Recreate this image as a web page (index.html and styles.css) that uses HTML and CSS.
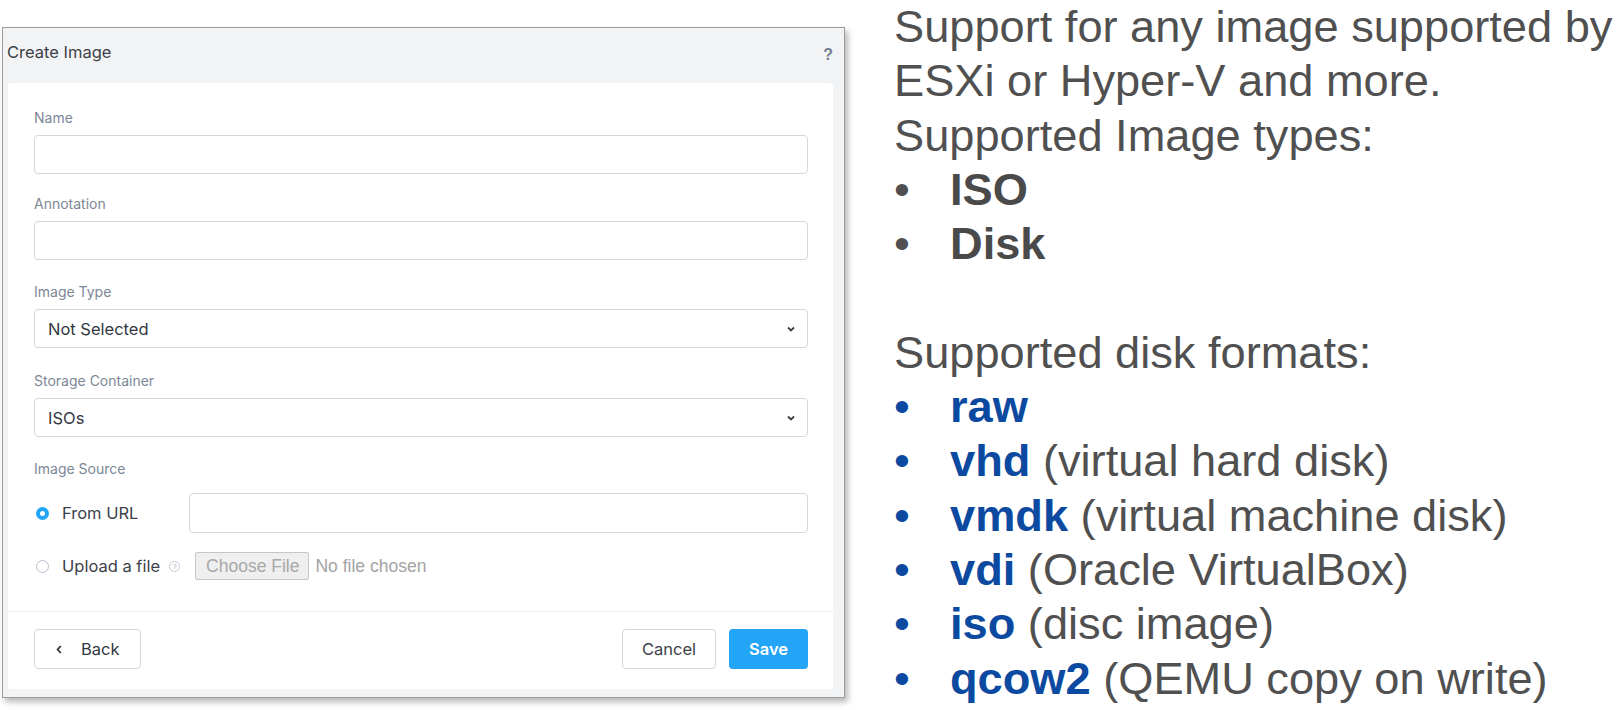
FILE: index.html
```html
<!DOCTYPE html>
<html lang="en">
<head>
<meta charset="utf-8">
<title>Create Image</title>
<link rel="stylesheet" href="styles.css">
</head>
<body>
<div class="page">
  <div class="dialog">
    <div class="dialog-header">
      <span class="dialog-title">Create Image</span>
      <span class="help">?</span>
    </div>
    <div class="panel">
      <div class="panel-body">
        <div class="field field-tight">
          <div class="label">Name</div>
          <div class="input"></div>
        </div>
        <div class="field">
          <div class="label">Annotation</div>
          <div class="input"></div>
        </div>
        <div class="field field-loose">
          <div class="label">Image Type</div>
          <div class="input select">
            <span>Not Selected</span>
            <svg class="chev" width="8" height="6" viewBox="0 0 8 6"><path d="M1 1.5 L4 4.5 L7 1.5" fill="none" stroke="#3a3f46" stroke-width="1.8"/></svg>
          </div>
        </div>
        <div class="field">
          <div class="label">Storage Container</div>
          <div class="input select">
            <span>ISOs</span>
            <svg class="chev" width="8" height="6" viewBox="0 0 8 6"><path d="M1 1.5 L4 4.5 L7 1.5" fill="none" stroke="#3a3f46" stroke-width="1.8"/></svg>
          </div>
        </div>
        <div class="label">Image Source</div>
        <div class="source-row">
          <div class="radio-wrap">
            <span class="radio radio-on"></span>
            <span class="radio-label">From URL</span>
          </div>
          <div class="input"></div>
        </div>
        <div class="upload-row">
          <span class="radio"></span>
          <span class="radio-label">Upload a file</span>
          <span class="mini-help">?</span>
          <span class="file-btn">Choose File</span>
          <span class="file-none">No file chosen</span>
        </div>
      </div>
      <div class="panel-footer">
        <div class="btn btn-back">
          <svg width="6" height="9" viewBox="0 0 6 9"><path d="M4.8 1 L1.6 4.5 L4.8 8" fill="none" stroke="#2f343b" stroke-width="1.8"/></svg>
          <span>Back</span>
        </div>
        <div class="footer-right">
          <div class="btn btn-cancel">Cancel</div>
          <div class="btn btn-save">Save</div>
        </div>
      </div>
    </div>
  </div>

  <div class="notes">
    <p>Support for any image supported by</p>
    <p>ESXi or Hyper-V and more.</p>
    <p>Supported Image types:</p>
    <ul class="list">
      <li><span class="bullet">•</span><b>ISO</b></li>
      <li><span class="bullet">•</span><b>Disk</b></li>
    </ul>
    <p class="gap">Supported disk formats:</p>
    <ul class="list blue">
      <li><span class="bullet">•</span><b>raw</b></li>
      <li><span class="bullet">•</span><b>vhd</b>&nbsp;(virtual hard disk)</li>
      <li><span class="bullet">•</span><b>vmdk</b>&nbsp;(virtual machine disk)</li>
      <li><span class="bullet">•</span><b>vdi</b>&nbsp;(Oracle VirtualBox)</li>
      <li><span class="bullet">•</span><b>iso</b>&nbsp;(disc image)</li>
      <li><span class="bullet">•</span><b>qcow2</b>&nbsp;(QEMU copy on write)</li>
    </ul>
  </div>
</div>
</body>
</html>
```
FILE: styles.css
```css
* { box-sizing: border-box; }
html, body { margin: 0; padding: 0; background: #ffffff; }
body { width: 1623px; height: 710px; overflow: hidden; }

.page {
  display: flex;
  align-items: flex-start;
}

/* ---------- dialog ---------- */
.dialog {
  margin: 27px 0 0 2px;
  width: 843px;
  height: 671px;
  border: 1px solid #9c9c9c;
  background: #f2f3f5;
  box-shadow: 3px 4px 6px rgba(0, 0, 0, 0.28);
  display: flex;
  flex-direction: column;
  font-family: Inter, Lato, sans-serif;
}

.dialog-header {
  height: 55px;
  display: flex;
  justify-content: space-between;
  align-items: flex-start;
  padding: 14px 11px 0 4px;
}
.dialog-title {
  font-size: 16.5px;
  line-height: 20px;
  color: #3c4148;
}
.help {
  margin-top: 5px;
  font-size: 16px;
  line-height: 16px;
  font-weight: 900;
  color: #6f7e92;
  font-family: "Liberation Sans", Arial, sans-serif;
}

.panel {
  flex: 1;
  margin: 0 11px 8px 5px;
  background: #ffffff;
  border-radius: 3px;
  display: flex;
  flex-direction: column;
}
.panel-body {
  padding: 27px 25px 25px 26px;
  border-bottom: 1px solid #eef0f3;
}

.field { margin-bottom: 24px; }
.field-tight { margin-bottom: 22px; }
.field-loose { margin-bottom: 25px; }
.label {
  font-size: 14px;
  line-height: 16px;
  color: #7c8796;
  margin-bottom: 9px;
}
.panel-body > .label { margin-bottom: 16px; }

.input {
  height: 39px;
  border: 1px solid #d2d7df;
  border-radius: 4px;
  background: #fff;
}
.select {
  display: flex;
  align-items: center;
  justify-content: space-between;
  padding: 0 12px 0 13px;
  font-size: 16.5px;
  color: #33383f;
}
.chev { display: block; }

.source-row {
  display: grid;
  grid-template-columns: 155px 1fr;
  align-items: center;
  height: 40px;
}
.source-row .input { height: 40px; }
.radio-wrap {
  display: flex;
  align-items: center;
  padding-left: 2px;
}
.radio {
  width: 13px;
  height: 13px;
  border-radius: 50%;
  border: 1px solid #b7bfcb;
  background: #fff;
  flex: none;
}
.radio-on {
  border: 4px solid #22a5f7;
}
.radio-label {
  margin-left: 13px;
  font-size: 16.5px;
  color: #3c4148;
}

.upload-row {
  margin-top: 13px;
  height: 40px;
  display: flex;
  align-items: center;
  padding-left: 2px;
}
.mini-help {
  margin-left: 9px;
  width: 11px;
  height: 11px;
  border-radius: 50%;
  border: 1px solid #c4cad3;
  color: #a9b1bc;
  font-size: 8px;
  line-height: 9px;
  text-align: center;
  font-family: "Liberation Sans", Arial, sans-serif;
}
.file-btn {
  margin-left: 15px;
  height: 28px;
  padding: 0 9px 0 10px;
  display: flex;
  align-items: center;
  border: 1px solid #c6c6c6;
  border-radius: 2px;
  background: #efefef;
  color: #a8a8a8;
  font-size: 17.5px;
  font-family: "Liberation Sans", Arial, sans-serif;
}
.file-btn + .file-none {
  margin-left: 6px;
  color: #a3a3a3;
  font-size: 17.5px;
  font-family: "Liberation Sans", Arial, sans-serif;
}

.panel-footer {
  display: flex;
  justify-content: space-between;
  padding: 17px 25px 0 26px;
}
.footer-right { display: flex; gap: 13px; }
.btn {
  height: 40px;
  border-radius: 4px;
  display: flex;
  align-items: center;
  font-size: 16.5px;
}
.btn-back {
  width: 107px;
  border: 1px solid #d2d7df;
  padding-left: 21px;
  gap: 19px;
  color: #33383f;
}
.btn-back svg { display: block; }
.btn-cancel {
  width: 94px;
  justify-content: center;
  border: 1px solid #d2d7df;
  color: #3c4148;
}
.btn-save {
  width: 79px;
  justify-content: center;
  background: #22a5f7;
  color: #ffffff;
  font-weight: 600;
}

/* ---------- notes ---------- */
.notes {
  margin-left: 49px;
  font-family: "Liberation Sans", Arial, sans-serif;
  font-size: 45.2px;
  line-height: 54.3px;
  color: #505050;
}
.notes p { margin: 0; white-space: nowrap; }
.notes .gap { margin-top: 54.3px; }
.list { list-style: none; margin: 0; padding: 0; }
.list li { display: flex; white-space: nowrap; }
.bullet { width: 56px; flex: none; }
.list b { color: #4a4a4a; }
.blue .bullet, .blue b { color: #0b4aa0; }
```
